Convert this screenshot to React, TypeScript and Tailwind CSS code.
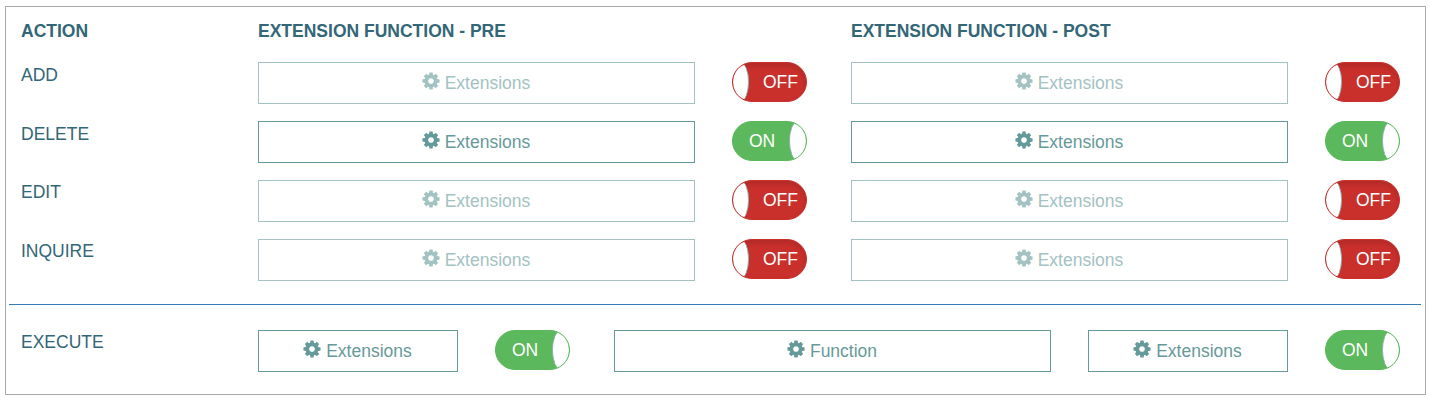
import React from 'react';

const font = "font-['Liberation_Sans',Arial,sans-serif]";

const Cog = () => (
  <svg viewBox="0 0 1792 1792" className="size-[20px] -translate-y-[2px] fill-current">
    <path d="M1152 896q0-106-75-181t-181-75-181 75-75 181 75 181 181 75 181-75 75-181zm512-109v222q0 12-8 23t-20 13l-185 28q-19 54-39 91 35 50 107 138 10 12 10 25t-9 23q-27 37-99 108t-94 71q-12 0-26-9l-138-108q-44 23-91 38-16 136-29 186-7 28-36 28h-222q-14 0-24.5-8.5t-11.5-21.5l-28-184q-49-16-90-37l-141 107q-10 9-25 9-14 0-25-11-126-114-165-168-7-10-7-23 0-12 8-23 15-21 51-66.5t54-70.5q-27-50-41-99l-183-27q-13-2-21-12.5t-8-23.5v-222q0-12 8-23t19-13l186-28q14-46 39-92-40-57-107-138-10-12-10-24 0-10 9-23 26-36 98.5-107.5t94.5-71.5q13 0 26 10l138 107q44-23 91-38 16-136 29-186 7-28 36-28h222q14 0 24.5 8.5t11.5 21.5l28 184q49 16 90 37l142-107q9-9 24-9 13 0 25 10 129 119 165 170 7 8 7 22 0 12-8 23-15 21-51 66.5t-54 70.5q26 50 41 98l183 28q13 2 21 12.5t8 23.5z" />
  </svg>
);

const Toggle = ({ on }: { on: boolean }) =>
  on ? (
    <div className="relative h-10 w-[75px] shrink-0 overflow-hidden rounded-[20px] border border-[#5cb85c] bg-[#5cb85c] text-white">
      <span className="absolute left-[16px] top-[9px] text-[17.5px] leading-5">ON</span>
      <span className="absolute right-0 top-0 h-[38px] w-[17px] rounded-[50%] border-l border-l-[#8fb0b0] bg-white" />
    </div>
  ) : (
    <div className="relative h-10 w-[75px] shrink-0 overflow-hidden rounded-[20px] border border-[#c9302c] bg-[#c9302c] text-white shadow-[inset_0_3px_5px_rgba(0,0,0,0.125)]">
      <span className="absolute left-[30px] top-[9px] text-[17.5px] leading-5">OFF</span>
      <span className="absolute left-0 top-0 h-[38px] w-[16px] rounded-[50%] border-r border-r-[#8fb0b0] bg-white" />
    </div>
  );

const ExtButton = ({ on, label = 'Extensions', width }: { on: boolean; label?: string; width: string }) => (
  <div
    className={`flex h-[42px] shrink-0 items-center justify-center gap-[4px] border pr-[2px] text-[17.5px] ${width} ${
      on ? 'border-[#669999] text-[#669999]' : 'border-[#a3c2c2] text-[#a3c2c2]'
    }`}
  >
    <Cog />
    <span>{label}</span>
  </div>
);

const rows = [
  { name: 'ADD', on: false, labelClass: 'pt-px' },
  { name: 'DELETE', on: true, labelClass: 'pt-px' },
  { name: 'EDIT', on: false, labelClass: '' },
  { name: 'INQUIRE', on: false, labelClass: '' },
];

export default function App() {
  return (
    <div className={`h-[400px] w-[1430px] bg-white pl-[5px] pt-[6px] ${font}`}>
      <div className="h-[389px] w-[1421px] border border-[#aaaaaa] px-[3px] text-[#336677]">
        {/* Header */}
        <div className="flex pl-[12px] pt-[14px] text-[17.5px] font-bold leading-5">
          <div className="w-[237px]">ACTION</div>
          <div className="w-[593px]">EXTENSION FUNCTION - PRE</div>
          <div>EXTENSION FUNCTION - POST</div>
        </div>

        <div className="mt-[21px] flex flex-col gap-[17px] pl-[12px]">
          {rows.map((r) => (
            <div key={r.name} className="flex h-[42px] items-start">
              <div className={`w-[237px] text-[17.5px] leading-6 ${r.labelClass}`}>{r.name}</div>
              <ExtButton on={r.on} width="w-[437px]" />
              <div className="ml-[37px] mr-[44px]">
                <Toggle on={r.on} />
              </div>
              <ExtButton on={r.on} width="w-[437px]" />
              <div className="ml-[37px]">
                <Toggle on={r.on} />
              </div>
            </div>
          ))}
        </div>

        <div className="mt-[23px] h-px w-[1412px] bg-[#337ab7]" />

        <div className="mt-[25px] flex h-[42px] items-start pl-[12px]">
          <div className="w-[237px] text-[17.5px] leading-6">EXECUTE</div>
          <ExtButton on width="w-[200px]" />
          <div className="ml-[37px] mr-[44px]">
            <Toggle on />
          </div>
          <ExtButton on label="Function" width="w-[437px]" />
          <div className="ml-[37px]">
            <ExtButton on width="w-[200px]" />
          </div>
          <div className="ml-[37px]">
            <Toggle on />
          </div>
        </div>
      </div>
    </div>
  );
}
